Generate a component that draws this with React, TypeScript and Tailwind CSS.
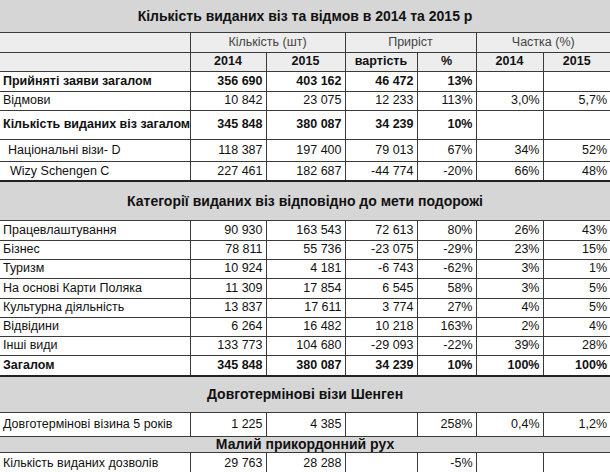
import React from "react";

type Row = {
  label: string;
  vals: string[];
  bold?: boolean;
  indent?: string;
  h: string;
  thick?: boolean;
};

const top: Row[] = [
  { label: "Прийняті заяви загалом", vals: ["356 690", "403 162", "46 472", "13%", "", ""], bold: true, h: "h-[20px]" },
  { label: "Відмови", vals: ["10 842", "23 075", "12 233", "113%", "3,0%", "5,7%"], h: "h-[19px]" },
  { label: "Кількість виданих віз загалом", vals: ["345 848", "380 087", "34 239", "10%", "", ""], bold: true, h: "h-[29px]" },
  { label: "Національні візи- D", vals: ["118 387", "197 400", "79 013", "67%", "34%", "52%"], indent: "pl-[8px]", h: "h-[22px]" },
  { label: "Wizy Schengen C", vals: ["227 461", "182 687", "-44 774", "-20%", "66%", "48%"], indent: "pl-[10px]", h: "h-[20px]", thick: true },
];

const cats: Row[] = [
  { label: "Працевлаштування", vals: ["90 930", "163 543", "72 613", "80%", "26%", "43%"], h: "h-[20px]" },
  { label: "Бізнес", vals: ["78 811", "55 736", "-23 075", "-29%", "23%", "15%"], h: "h-[19px]" },
  { label: "Туризм", vals: ["10 924", "4 181", "-6 743", "-62%", "3%", "1%"], h: "h-[19px]" },
  { label: "На основі Карти Поляка", vals: ["11 309", "17 854", "6 545", "58%", "3%", "5%"], h: "h-[20px]" },
  { label: "Культурна діяльність", vals: ["13 837", "17 611", "3 774", "27%", "4%", "5%"], h: "h-[19px]" },
  { label: "Відвідини", vals: ["6 264", "16 482", "10 218", "163%", "2%", "4%"], h: "h-[19px]" },
  { label: "Інші види", vals: ["133 773", "104 680", "-29 093", "-22%", "39%", "28%"], h: "h-[19px]" },
  { label: "Загалом", vals: ["345 848", "380 087", "34 239", "10%", "100%", "100%"], bold: true, h: "h-[21px]", thick: true },
];

function DataRow({ r }: { r: Row }) {
  const b = r.thick ? "border-b-2 border-b-[#222]" : "";
  return (
    <tr className={r.h}>
      <td className={`border border-[#3a3a3a] border-l-0 pl-[3px] whitespace-nowrap ${r.indent ?? ""} ${r.bold ? "font-bold" : ""} ${b}`}>
        {r.label}
      </td>
      {r.vals.map((v, i) => (
        <td
          key={i}
          className={`border border-[#3a3a3a] pr-[3px] text-right ${i === 5 ? "border-r-0" : ""} ${r.bold ? "font-bold" : ""} ${b}`}
        >
          {v}
        </td>
      ))}
    </tr>
  );
}

function Heading({ text, h }: { text: string; h: string }) {
  return (
    <tr className={h}>
      <td colSpan={7} className="border-y border-[#3a3a3a] bg-[#d6d6d6] text-center text-[14px] font-bold">
        {text}
      </td>
    </tr>
  );
}

export default function App() {
  return (
    <div className="w-[610px] h-[472px] overflow-hidden bg-white text-[12.5px] text-[#111] leading-none font-['Liberation_Sans',Arial,sans-serif]">
      <table className="w-[610px] table-fixed border-collapse">
        <colgroup>
          <col className="w-[190px]" />
          <col className="w-[76px]" />
          <col className="w-[79px]" />
          <col className="w-[72px]" />
          <col className="w-[59px]" />
          <col className="w-[67px]" />
          <col className="w-[67px]" />
        </colgroup>
        <tbody>
          <tr className="h-[32px]">
            <td colSpan={7} className="border-b border-[#3a3a3a] bg-[#d6d6d6] text-center text-[14px] font-bold">
              Кількість виданих віз та відмов в 2014 та 2015 р
            </td>
          </tr>
          <tr className="h-[20px] bg-[#ededed] text-[#444]">
            <td className="border border-[#3a3a3a] border-l-0" />
            <td colSpan={2} className="border border-[#3a3a3a] text-center">Кількість (шт)</td>
            <td colSpan={2} className="border border-[#3a3a3a] text-center">Приріст</td>
            <td colSpan={2} className="border border-[#3a3a3a] border-r-0 text-center">Частка (%)</td>
          </tr>
          <tr className="h-[19px] bg-[#ededed] font-bold">
            <td className="border border-[#3a3a3a] border-l-0" />
            <td className="border border-[#3a3a3a] text-center">2014</td>
            <td className="border border-[#3a3a3a] text-center">2015</td>
            <td className="border border-[#3a3a3a] text-center">вартість</td>
            <td className="border border-[#3a3a3a] text-center">%</td>
            <td className="border border-[#3a3a3a] text-center">2014</td>
            <td className="border border-[#3a3a3a] border-r-0 text-center">2015</td>
          </tr>
          {top.map((r) => (
            <DataRow key={r.label} r={r} />
          ))}
          <Heading text="Категорії виданих віз відповідно до мети подорожі" h="h-[39px]" />
          {cats.map((r) => (
            <DataRow key={r.label} r={r} />
          ))}
          <Heading text="Довготермінові візи Шенген" h="h-[36px]" />
          <DataRow r={{ label: "Довготермінові візина 5 років", vals: ["1 225", "4 385", "", "258%", "0,4%", "1,2%"], h: "h-[24px]" }} />
          <Heading text="Малий прикордонний рух" h="h-[16px]" />
          <DataRow r={{ label: "Кількість виданих дозволів", vals: ["29 763", "28 288", "", "-5%", "", ""], h: "h-[22px]" }} />
        </tbody>
      </table>
    </div>
  );
}
